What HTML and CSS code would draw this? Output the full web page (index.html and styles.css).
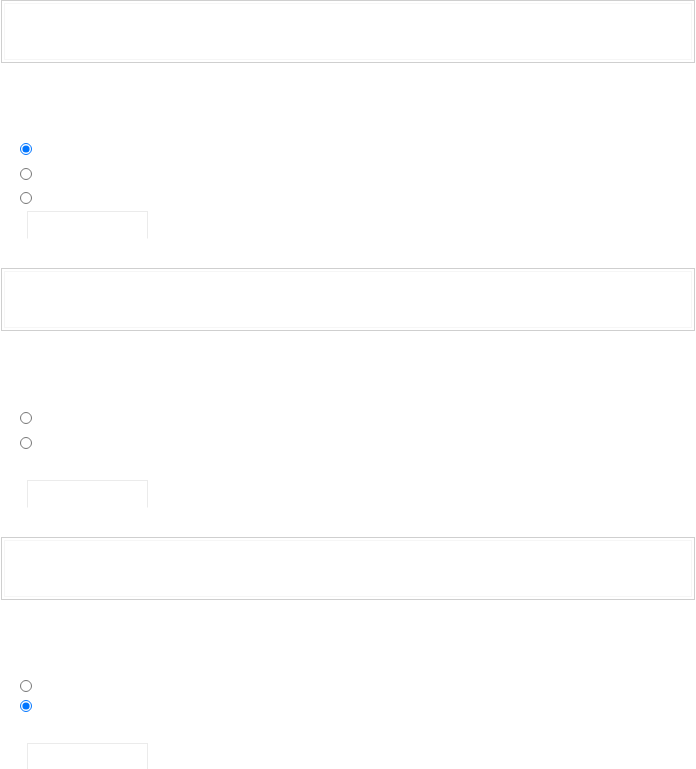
FILE: index.html
```html
<!DOCTYPE html>
<html>
<head>
    <meta charset="UTF-8">
    <meta name="viewport" content="width=device-width, initial-scale=1.0">
    <title>Questions</title>

    <link rel="stylesheet" href="styles.css">
</head>

<body>
    <div class="question">
        <div class="prompt"></div>
        <div class="options">
            <label class="option"><input type="radio" name="q1" checked></label>
            <label class="option"><input type="radio" name="q1"></label>
            <label class="option"><input type="radio" name="q1"></label>
        </div>
        <input type="text" class="answer">
    </div>

    <div class="question second">
        <div class="prompt"></div>
        <div class="options">
            <label class="option"><input type="radio" name="q2"></label>
            <label class="option"><input type="radio" name="q2"></label>
            <div class="option"></div>
        </div>
        <input type="text" class="answer">
    </div>

    <div class="question third">
        <div class="prompt"></div>
        <div class="options compact">
            <label class="option"><input type="radio" name="q3"></label>
            <label class="option"><input type="radio" name="q3" checked></label>
            <div class="option"></div>
        </div>
        <input type="text" class="answer">
    </div>
</body>
</html>
```

FILE: styles.css
```css
body {
    margin: 0;
    font-family: Arial, "Liberation Sans", sans-serif;
    font-size: 13px;
    background-color: #fff;
}

.question {
    height: 268px;
}

.question.second {
    height: 269px;
}

.prompt {
    margin: 0 1px;
    height: 61px;
    border: 1px solid #cfcfcf;
    box-shadow: inset 0 0 0 2px #fff, inset 0 0 0 3px #f6f6f6;
}

.options {
    margin-top: 74px;
    padding-left: 14px;
}

.second .options {
    margin-top: 75px;
}

.option {
    display: flex;
    align-items: center;
    height: 24.5px;
}

.option input {
    margin: 0 3px 0 6px;
    width: 12px;
    height: 12px;
}

.compact {
    margin-top: 76px;
}

.compact .option {
    height: 20px;
}

.answer {
    display: block;
    box-sizing: border-box;
    margin: 0 0 0 27px;
    padding: 0;
    width: 121px;
    height: 28px;
    border: 1px solid #ebebeb;
    border-bottom-color: transparent;
    outline: none;
}

.compact + .answer {
    margin-top: 7px;
}
```
